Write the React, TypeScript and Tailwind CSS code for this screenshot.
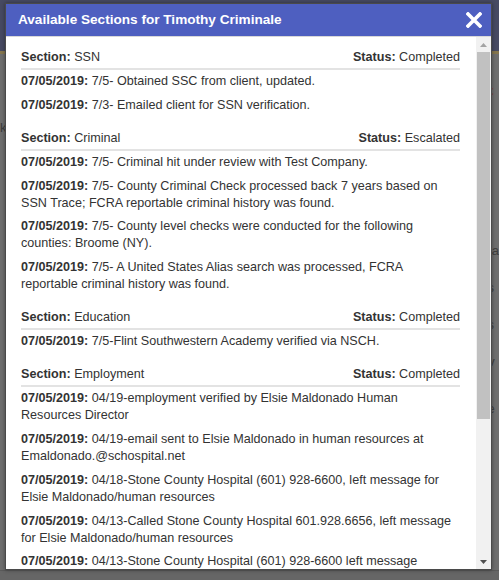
import React from "react";

type Section = {
  name: string;
  status: string;
  notes: React.ReactNode[];
};

const sections: Section[] = [
  {
    name: "SSN",
    status: "Completed",
    notes: [
      "7/5- Obtained SSC from client, updated.",
      "7/3- Emailed client for SSN verification.",
    ],
  },
  {
    name: "Criminal",
    status: "Escalated",
    notes: [
      "7/5- Criminal hit under review with Test Company.",
      "7/5- County Criminal Check processed back 7 years based on SSN Trace; FCRA reportable criminal history was found.",
      "7/5- County level checks were conducted for the following counties: Broome (NY).",
      "7/5- A United States Alias search was processed, FCRA reportable criminal history was found.",
    ],
  },
  {
    name: "Education",
    status: "Completed",
    notes: ["7/5-Flint Southwestern Academy verified via NSCH."],
  },
  {
    name: "Employment",
    status: "Completed",
    notes: [
      "04/19-employment verified by Elsie Maldonado Human Resources Director",
      "04/19-email sent to Elsie Maldonado in human resources at Emaldonado.@schospital.net",
      "04/18-Stone County Hospital (601) 928-6600, left message for Elsie Maldonado/human resources",
      "04/13-Called Stone County Hospital 601.928.6656, left message for Elsie Maldonado/human resources",
      <>
        04/13-Stone County Hospital (601) 928-6600 left message
        <br />
        for Elsie Maldonado/human resources
      </>,
    ],
  },
];

function SectionBlock({ s }: { s: Section }) {
  return (
    <div className="mb-[16px]">
      <div className="flex justify-between border-b-2 border-[#e3e3e3] pb-[2px] leading-[17px]">
        <span>
          <b>Section:</b> {s.name}
        </span>
        <span>
          <b>Status:</b> {s.status}
        </span>
      </div>
      <div className="pt-[3px]">
        {s.notes.map((n, i) => (
          <p key={i} className="mb-[6.8px] leading-[17px]">
            <b>07/05/2019:</b> {n}
          </p>
        ))}
      </div>
    </div>
  );
}

export default function App() {
  return (
    <div
      className="relative h-[580px] w-[499px] overflow-hidden bg-[#707070]"
      style={{ fontFamily: '"Liberation Sans", Arial, sans-serif' }}
    >
      {/* dimmed page behind */}
      <div className="flex h-full flex-col">
        <div className="h-[51px] bg-[#474a62]" />
        <div className="h-[3px] bg-[#85764e]" />
        <div className="flex-1 bg-[#6e6e6e]" />
        <div className="h-[10px] border-t border-[#5a5a5a] bg-[#666]" />
      </div>
      <div className="absolute left-0 top-[118px] text-[13px] text-[#3c3c3c]">k</div>
      <div className="absolute right-0 top-[83px] flex flex-col gap-[20px] text-[13px] leading-[17px] text-[#3f3f3f]">
        <span className="text-[#7a4a40]">C</span>
        <span className="mt-[48px]">it</span>
        <span>y</span>
        <span>da</span>
        <span>is</span>
        <span>is</span>
        <span>tv</span>
        <span className="mt-[10px]">le</span>
      </div>

      {/* dialog */}
      <div className="absolute left-[5px] top-[3px] flex h-[567px] w-[487px] flex-col border border-[#4a4a4a] bg-white shadow-[0_0_4px_rgba(0,0,0,0.4)]">
        <div className="flex h-[32px] shrink-0 items-center justify-between bg-[#4e5fc0] pl-[12px] pr-[8px]">
          <span className="text-[13.6px] font-bold text-white">
            Available Sections for Timothy Criminale
          </span>
          <svg width="16" height="16" viewBox="0 0 16 16" className="mr-[1px]">
            <path d="M2 2L14 14M14 2L2 14" stroke="white" strokeWidth="3.6" strokeLinecap="square" />
          </svg>
        </div>
        <div className="flex min-h-0 flex-1 border-t border-[#d8d8d8]">
          <div className="min-h-0 flex-1 overflow-hidden pl-[15px] pr-[16px] pt-[12px] text-[12.6px] text-[#333]">
            {sections.map((s) => (
              <SectionBlock key={s.name} s={s} />
            ))}
          </div>
          <div className="flex w-[15px] shrink-0 flex-col bg-[#f1f1f1]">
            <div className="flex h-[15px] items-center justify-center">
              <svg width="7" height="4" viewBox="0 0 7 4">
                <path d="M0 4L3.5 0L7 4Z" fill="#a3a3a3" />
              </svg>
            </div>
            <div className="mx-[1px] h-[367px] bg-[#c1c1c1]" />
            <div className="flex-1" />
            <div className="flex h-[15px] items-center justify-center">
              <svg width="7" height="4" viewBox="0 0 7 4">
                <path d="M0 0L7 0L3.5 4Z" fill="#505050" />
              </svg>
            </div>
          </div>
        </div>
      </div>
    </div>
  );
}
